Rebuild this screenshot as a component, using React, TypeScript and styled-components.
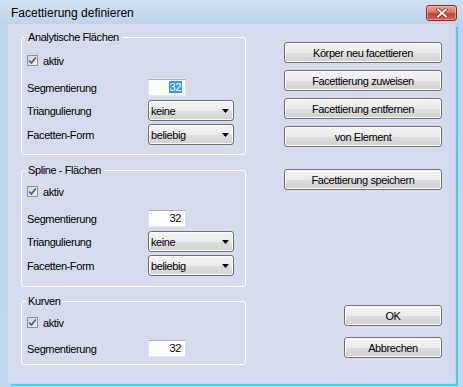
import React from 'react'
import styled, { createGlobalStyle } from 'styled-components'

const GlobalStyle = createGlobalStyle`
  html, body {
    margin: 0;
    padding: 0;
  }
  body {
    width: 463px;
    height: 387px;
    overflow: hidden;
    font-family: "Liberation Sans", Arial, sans-serif;
  }
`

const Window = styled.div`
  width: 463px;
  height: 387px;
  display: flex;
  flex-direction: column;
  background: linear-gradient(180deg, #cfe0f2 0px, #bed3eb 24px, #c3d7ee 100%);
`

const TitleBar = styled.div`
  height: 24px;
  flex: none;
  box-sizing: border-box;
  display: flex;
  align-items: center;
  justify-content: space-between;
  padding: 1px 6px 0 11px;
`

const Title = styled.span`
  font-size: 12px;
  color: #000;
`

const CloseButton = styled.div`
  width: 31px;
  height: 16px;
  box-sizing: border-box;
  border: 1px solid #7b2e22;
  border-radius: 3px;
  display: flex;
  align-items: center;
  justify-content: center;
  background: linear-gradient(180deg, #e8a493 0%, #d7765f 45%, #c4442a 55%, #d0654c 100%);
  box-shadow: inset 0 0 0 1px rgba(255, 220, 210, 0.5);
`

const Body = styled.div`
  flex: 1;
  margin: 0 8px 4px 8px;
  box-sizing: border-box;
  display: flex;
  gap: 38px;
  padding: 7px 13px 0 13px;
  background: repeating-conic-gradient(#dadef0 0 25%, #d2d7ea 0 50%) 0 0 / 2px 2px;
  box-shadow: 1px 1px 0 #c3d7ee, 3px 3px 0 #46cdee;
`

const LeftColumn = styled.div`
  width: 225px;
  flex: none;
  display: flex;
  flex-direction: column;
`

const GroupBox = styled.fieldset<{ $mt?: number; $pb: number }>`
  margin: ${p => p.$mt ?? 0}px 0 0 0;
  padding: 0 8px ${p => p.$pb}px 5px;
  min-width: 0;
  border: 1px solid #ffffff;
  border-radius: 3px;
`

const Legend = styled.legend`
  font-size: 11px;
  line-height: 13px;
  letter-spacing: -0.4px;
  padding: 0 3px 0 2px;
  margin-left: -1px;
  color: #000;
`

const Row = styled.div<{ $mt: number }>`
  display: flex;
  align-items: center;
  margin-top: ${p => p.$mt}px;
`

const CheckRow = styled(Row)`
  height: 13px;
`

const Label = styled.span`
  width: 121px;
  flex: none;
  font-size: 11px;
  letter-spacing: -0.4px;
  color: #000;
`

const CheckBox = styled.span`
  width: 11px;
  height: 11px;
  box-sizing: border-box;
  border: 1px solid #8e8f8f;
  background: linear-gradient(135deg, #cfd3d9 0%, #f4f4f4 100%);
  display: flex;
  align-items: center;
  justify-content: center;
`

const CheckText = styled.span`
  margin-left: 5px;
  font-size: 11px;
  letter-spacing: -0.4px;
  color: #000;
`

const NumberBox = styled.div`
  width: 38px;
  height: 17px;
  box-sizing: border-box;
  border: 1px solid;
  border-color: #abadb3 #dbdfe6 #e3e9ef #e2e3ea;
  background: #fff;
  text-align: right;
  padding-right: 3px;
  font-size: 11px;
  line-height: 15px;
  letter-spacing: -0.4px;
  color: #000;
`

const Selected = styled.span<{ $on: boolean }>`
  background: ${p => (p.$on ? '#3399ff' : 'transparent')};
  color: ${p => (p.$on ? '#fff' : '#000')};
  padding: 0 1px;
`

const SelectBox = styled.div`
  width: 86px;
  height: 21px;
  box-sizing: border-box;
  border: 1px solid #707070;
  border-radius: 3px;
  display: flex;
  align-items: center;
  justify-content: space-between;
  padding: 0 4px 0 2px;
  background: linear-gradient(180deg, #f3f3f3 0%, #ececec 50%, #dedede 52%, #d2d2d2 100%);
  box-shadow: inset 0 0 0 1px #fbfbfb;
  font-size: 11px;
  letter-spacing: -0.4px;
  color: #000;
`

const RightColumn = styled.div`
  width: 158px;
  flex: none;
  display: flex;
  flex-direction: column;
  padding: 11px 0 25px 0;
  box-sizing: border-box;
`

const Button = styled.button<{ $w?: number; $mt?: number }>`
  width: ${p => (p.$w ? `${p.$w}px` : '100%')};
  height: 21px;
  margin: ${p => p.$mt ?? 0}px 0 0 0;
  padding: 0;
  box-sizing: border-box;
  border: 1px solid #707070;
  border-radius: 3px;
  background: linear-gradient(180deg, #f3f3f3 0%, #ebebeb 50%, #dddddd 52%, #cfcfcf 100%);
  box-shadow: inset 0 0 0 1px #fcfcfc;
  font-family: "Liberation Sans", Arial, sans-serif;
  font-size: 11px;
  letter-spacing: -0.4px;
  color: #000;
`

const DialogButtons = styled.div`
  margin-top: auto;
  align-self: flex-end;
  display: flex;
  flex-direction: column;
  gap: 11px;
`

const Check = () => (
  <CheckBox>
    <svg width="9" height="9" viewBox="0 0 9 9">
      <path d="M1.2 4.6 L3.4 7 L7.8 1.4" fill="none" stroke="#3b5aa0" strokeWidth="1.6" />
    </svg>
  </CheckBox>
)

const Arrow = () => (
  <svg width="7" height="4" viewBox="0 0 7 4">
    <polygon points="0,0 7,0 3.5,4" fill="#000" />
  </svg>
)

const Select = ({ value }: { value: string }) => (
  <SelectBox>
    <span>{value}</span>
    <Arrow />
  </SelectBox>
)

const Number = ({ value, selected = false }: { value: string; selected?: boolean }) => (
  <NumberBox>
    <Selected $on={selected}>{value}</Selected>
  </NumberBox>
)

type GroupProps = {
  title: string
  selected?: boolean
  withSelects?: boolean
  mt?: number
  checkTop: number
  inputTop: number
  pb: number
}

const Group = ({ title, selected, withSelects = true, mt, checkTop, inputTop, pb }: GroupProps) => (
  <GroupBox $mt={mt} $pb={pb}>
    <Legend>{title}</Legend>
    <CheckRow $mt={checkTop}>
      <Check />
      <CheckText>aktiv</CheckText>
    </CheckRow>
    <Row $mt={inputTop}>
      <Label>Segmentierung</Label>
      <Number value="32" selected={selected} />
    </Row>
    {withSelects && (
      <>
        <Row $mt={4}>
          <Label>Triangulierung</Label>
          <Select value="keine" />
        </Row>
        <Row $mt={3}>
          <Label>Facetten-Form</Label>
          <Select value="beliebig" />
        </Row>
      </>
    )}
  </GroupBox>
)

export default function App() {
  return (
    <>
      <GlobalStyle />
      <Window>
        <TitleBar>
          <Title>Facettierung definieren</Title>
          <CloseButton>
            <svg width="12" height="10" viewBox="0 0 12 10">
              <path d="M2 1.5 L10 8.5 M10 1.5 L2 8.5" stroke="#6b2418" strokeWidth="3.4" strokeLinecap="square" />
              <path d="M2 1.5 L10 8.5 M10 1.5 L2 8.5" stroke="#ffffff" strokeWidth="2" strokeLinecap="square" />
            </svg>
          </CloseButton>
        </TitleBar>
        <Body>
          <LeftColumn>
            <Group title="Analytische Flächen" selected checkTop={10} inputTop={12} pb={9} />
            <Group title="Spline - Flächen" mt={9} checkTop={8} inputTop={12} pb={10} />
            <Group title="Kurven" mt={8} checkTop={8} inputTop={11} pb={7} withSelects={false} />
          </LeftColumn>
          <RightColumn>
            <Button>Körper neu facettieren</Button>
            <Button $mt={7}>Facettierung zuweisen</Button>
            <Button $mt={7}>Facettierung entfernen</Button>
            <Button $mt={7}>von Element</Button>
            <Button $mt={22}>Facettierung speichern</Button>
            <DialogButtons>
              <Button $w={98}>OK</Button>
              <Button $w={98}>Abbrechen</Button>
            </DialogButtons>
          </RightColumn>
        </Body>
      </Window>
    </>
  )
}
